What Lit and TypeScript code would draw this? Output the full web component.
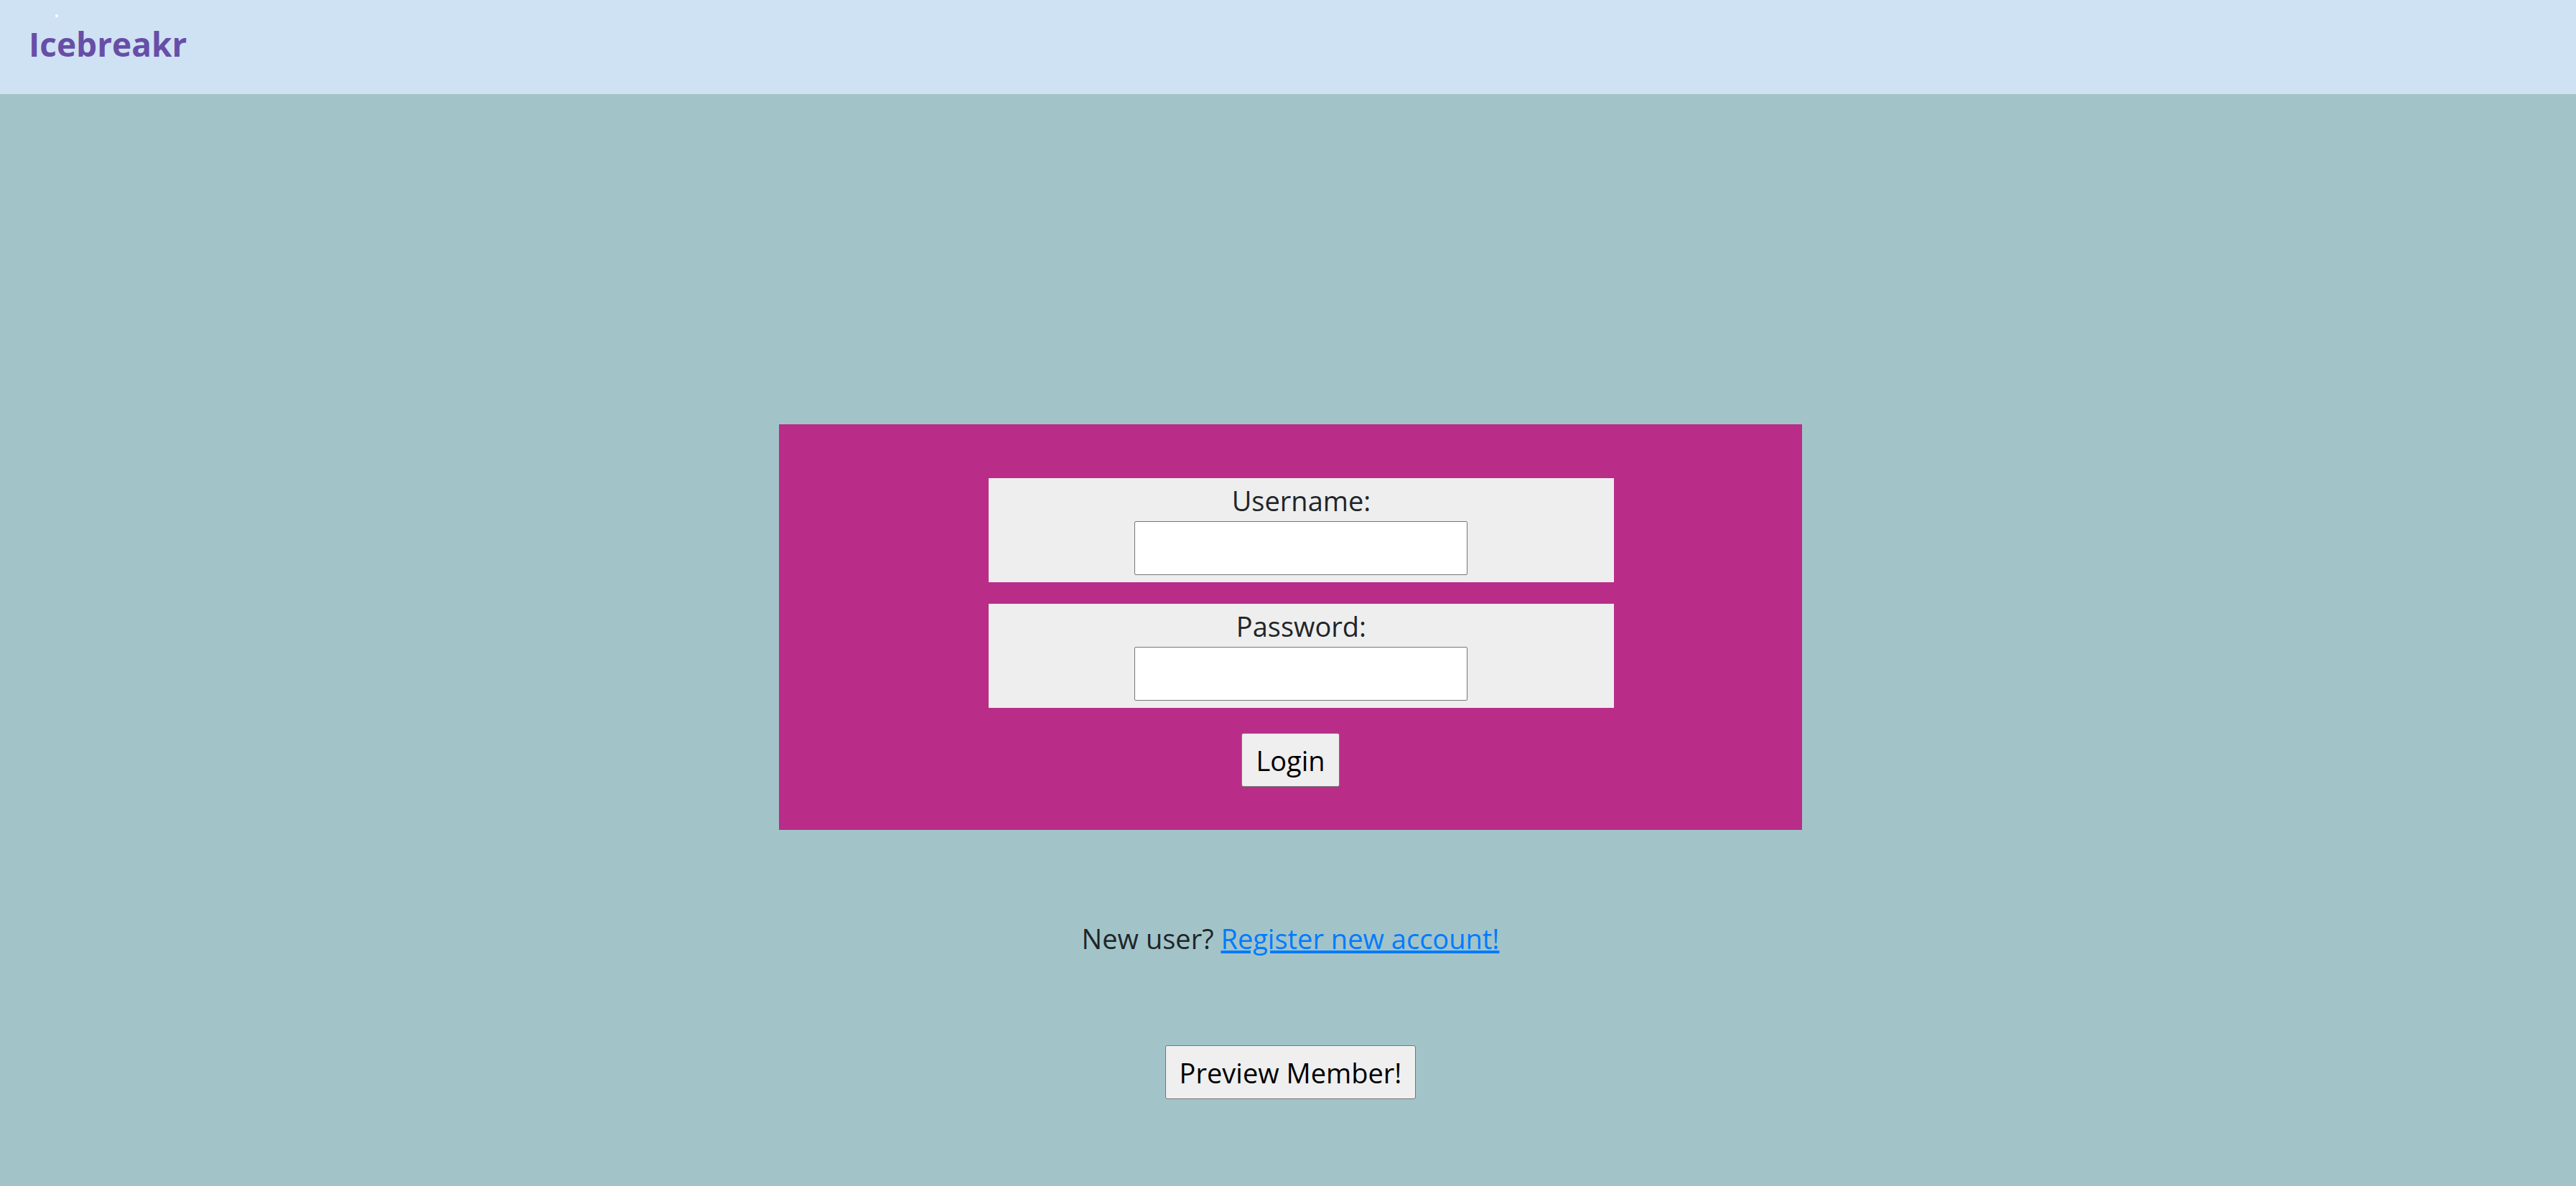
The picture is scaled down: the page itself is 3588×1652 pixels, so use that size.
import { LitElement, html, css } from "lit";
import { customElement } from "lit/decorators.js";

@customElement("app-root")
export class AppRoot extends LitElement {
  static styles = css`
    :host {
      display: block;
      min-height: 100vh;
      background: #a2c4c9;
      color: #212529;
      font-family: "Segoe UI", "Open Sans", "Noto Sans", sans-serif;
      font-size: 38px;
      line-height: 62px;
    }
    * {
      box-sizing: border-box;
    }
    .header {
      display: flex;
      align-items: flex-start;
      position: relative;
      height: 131px;
      padding: 30px 40px;
      background: #cfe2f3;
      border-bottom: 2px solid #d8e3e8;
    }
    .brand {
      color: #674ea7;
      font-size: 46px;
      font-weight: 700;
      text-decoration: none;
    }
    .dot {
      position: absolute;
      left: 77px;
      top: 20px;
      width: 4px;
      height: 4px;
      border-radius: 50%;
      background: #ffffff;
    }
    .main {
      display: flex;
      flex-direction: column;
      align-items: center;
      padding: 460px 0 60px 7px;
    }
    .card {
      display: flex;
      flex-direction: column;
      align-items: center;
      width: 39.8%;
      padding: 75px 0 60px;
      background: #b92d89;
    }
    .fields {
      display: flex;
      flex-direction: column;
      align-items: center;
      gap: 30px;
      width: 100%;
      padding-left: 30px;
      margin-bottom: 35px;
    }
    .field {
      display: flex;
      flex-direction: column;
      align-items: center;
      width: 62.4%;
      padding-bottom: 10px;
      background: #eeeeee;
    }
    .input {
      width: 464px;
      height: 75px;
      margin-top: -2px;
      padding: 2px 4px;
      border: 1px solid #767676;
      border-radius: 2px;
      background: #ffffff;
      font: inherit;
    }
    .button {
      height: 75px;
      padding: 0 19px;
      border: 1px solid #767676;
      border-radius: 3px;
      background: #efefef;
      color: #000000;
      font: inherit;
    }
    .signup {
      margin: 120px 0 118px;
    }
    .link {
      color: #007bff;
      text-decoration: underline;
      text-decoration-thickness: 4px;
    }
  `;

  render() {
    return html`
      <header class="header">
        <span class="dot"></span>
        <a class="brand" href="#">Icebreakr</a>
      </header>
      <main class="main">
        <form class="card">
          <div class="fields">
            <div class="field">
              <label for="username">Username:</label>
              <input class="input" id="username" type="text" />
            </div>
            <div class="field">
              <label for="password">Password:</label>
              <input class="input" id="password" type="password" />
            </div>
          </div>
          <button class="button" type="button">Login</button>
        </form>
        <p class="signup">
          New user? <a class="link" href="#register">Register new account!</a>
        </p>
        <button class="button" type="button">Preview Member!</button>
      </main>
    `;
  }
}
